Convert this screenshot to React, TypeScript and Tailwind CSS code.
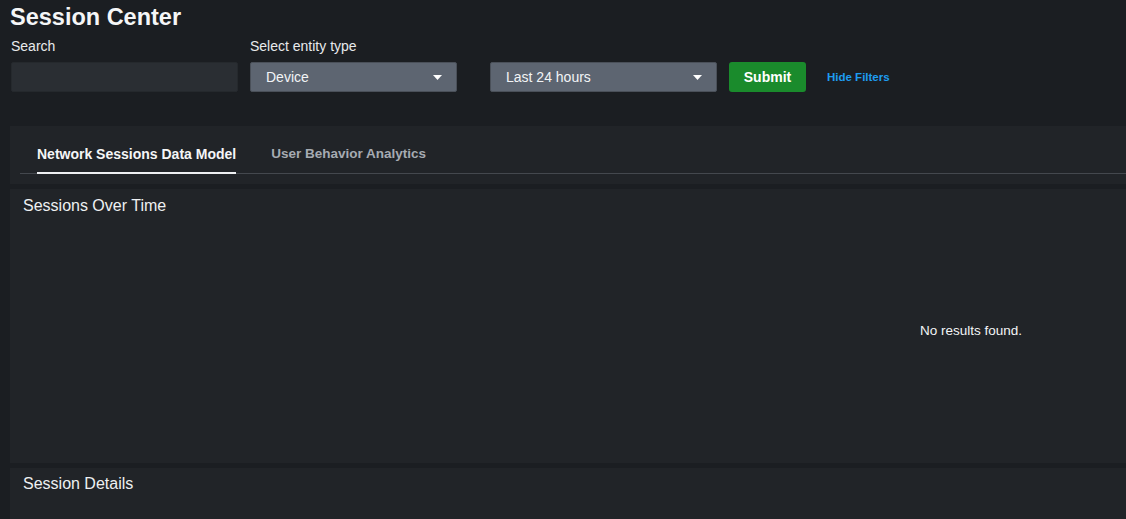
const FONT = "font-['Liberation_Sans','Open_Sans',sans-serif]"

function Caret() {
  return (
    <svg width="9" height="5" viewBox="0 0 9 5" className="shrink-0">
      <path d="M0 0h9L4.5 5z" fill="#ffffff" />
    </svg>
  )
}

function SelectBox({ label, width }: { label: string; width: string }) {
  return (
    <div className={`${width} h-[30px] rounded-[2px] border border-[#4a5059] bg-[#5d6571] flex items-center justify-between pl-[15px] pr-[14px]`}>
      <span className="text-[14px] text-[#f2f4f6]">{label}</span>
      <Caret />
    </div>
  )
}

export default function App() {
  return (
    <div className={`${FONT} w-[1126px] h-[519px] overflow-hidden bg-[#1b1e22] text-white`}>
      {/* Header */}
      <div className="pl-[10px] pt-[3px]">
        <h1 className="text-[23.5px] font-bold leading-[28px] text-[#f5f6f7]">Session Center</h1>
      </div>

      {/* Filters */}
      <div className="flex items-end pl-[11px] mt-[7px]">
        <div className="flex flex-col">
          <label className="text-[14px] leading-[16px] text-[#e8eaec] mb-[8px]">Search</label>
          <div className="w-[227px] h-[30px] rounded-[2px] bg-[#2a2e33] border border-[#25292d]" />
        </div>
        <div className="flex flex-col ml-[12px]">
          <label className="text-[14px] leading-[16px] text-[#e8eaec] mb-[8px]">Select entity type</label>
          <SelectBox label="Device" width="w-[207px]" />
        </div>
        <div className="ml-[33px]">
          <SelectBox label="Last 24 hours" width="w-[227px]" />
        </div>
        <button className="ml-[12px] w-[77px] h-[30px] rounded-[3px] bg-[#1a8b2c] text-[14px] font-bold text-white">
          Submit
        </button>
        <a className="ml-[21px] h-[29px] flex items-center text-[11.5px] font-bold text-[#1e9cf0]">Hide Filters</a>
      </div>

      {/* Tabs panel */}
      <div className="ml-[10px] mt-[34px] h-[58px] bg-[#212428] pl-[10px] pt-[19px]">
        <div className="flex border-b border-[#44484e] h-[29px]">
          <div className="ml-[17px] h-[29px] border-b-2 border-[#eef0f2] text-[14px] font-bold text-[#f5f6f7] leading-[18px]">
            Network Sessions Data Model
          </div>
          <div className="ml-[35px] text-[13.5px] font-bold text-[#a6abb2] leading-[18px]">
            User Behavior Analytics
          </div>
        </div>
      </div>

      {/* Sessions Over Time */}
      <div className="ml-[10px] mt-[5px] h-[274px] bg-[#212428] flex flex-col">
        <div className="pl-[13px] pt-[7px] text-[16px] leading-[19px] text-[#eef0f2]">Sessions Over Time</div>
        <div className="flex-1 flex items-center justify-end pr-[104px] pb-[16px]">
          <span className="text-[13.5px] text-[#f2f4f6]">No results found.</span>
        </div>
      </div>

      {/* Session Details */}
      <div className="ml-[10px] mt-[5px] h-[60px] bg-[#212428]">
        <div className="pl-[13px] pt-[6px] text-[16px] leading-[19px] text-[#eef0f2]">Session Details</div>
      </div>
    </div>
  )
}
